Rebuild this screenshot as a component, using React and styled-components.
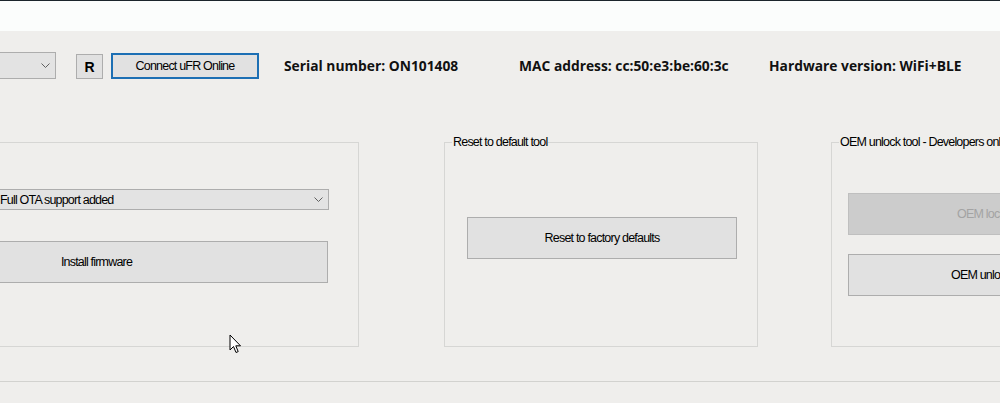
import React from 'react';
import styled, { createGlobalStyle } from 'styled-components';

const GlobalStyle = createGlobalStyle`
  html, body {
    margin: 0;
    padding: 0;
    width: 1000px;
    height: 403px;
    overflow: hidden;
    background: #efeeec;
  }
`;

const Window = styled.div`
  position: relative;
  width: 1000px;
  height: 403px;
  overflow: hidden;
  background: #efeeec;
  font-family: "Liberation Sans", Arial, sans-serif;
  font-size: 12.5px;
  letter-spacing: -0.8px;
  color: #000;
  display: flex;
  flex-direction: column;
`;

const TitleStrip = styled.div`
  flex: none;
  height: 30px;
  background: #fbfdfc;
  border-top: 1px solid #1b252b;
`;

const Canvas = styled.div`
  width: 1400px;
  margin-left: -160px;
  padding-left: 10px;
  display: flex;
  flex-direction: column;
`;

const Toolbar = styled.div`
  margin-top: 21px;
  height: 27px;
  display: flex;
  align-items: flex-end;
`;

const Combo = styled.div`
  box-sizing: border-box;
  width: ${p => p.$w}px;
  height: ${p => p.$h}px;
  margin: ${p => p.$m || '0'};
  padding-left: ${p => p.$indent || 3}px;
  padding-right: 5px;
  background: #e3e3e3;
  border: 1px solid #adadad;
  display: flex;
  align-items: center;
  justify-content: space-between;
  white-space: nowrap;
`;

const Button = styled.div`
  box-sizing: border-box;
  width: ${p => p.$w}px;
  height: ${p => p.$h}px;
  margin: ${p => p.$m || '0'};
  background: ${p => (p.$disabled ? '#cccccc' : '#e1e1e1')};
  border: ${p => (p.$focus ? '2px solid #1c6fb4' : p.$disabled ? '1px solid #bfbfbf' : '1px solid #adadad')};
  color: ${p => (p.$disabled ? '#a3a3a3' : '#000')};
  font-weight: ${p => (p.$bold ? 700 : 400)};
  font-size: ${p => (p.$bold ? '14px' : '12.5px')};
  letter-spacing: ${p => (p.$bold ? '0' : '-0.8px')};
  display: flex;
  align-items: center;
  justify-content: center;
  white-space: nowrap;
  flex: none;
`;

const InfoLabel = styled.div`
  width: ${p => (p.$w ? `${p.$w}px` : 'auto')};
  margin-left: ${p => p.$ml || 0}px;
  align-self: center;
  font-family: "Open Sans", "Liberation Sans", sans-serif;
  font-weight: 700;
  font-size: 13.8px;
  letter-spacing: 0;
  color: #111;
  white-space: nowrap;
  flex: none;
`;

const GroupRow = styled.div`
  margin-top: 56px;
  display: flex;
  align-items: flex-start;
`;

// a fieldset with a legend draws its top border at the legend's middle (7px down)
const Group = styled.fieldset`
  box-sizing: border-box;
  width: ${p => p.$w}px;
  height: ${p => (p.$bare ? 205 : 212)}px;
  margin: ${p => (p.$bare ? 7 : 0)}px 0 0 ${p => p.$ml || 0}px;
  padding: 0;
  min-width: 0;
  border: 1px solid #d6d6d4;
  display: flex;
  flex-direction: column;
  flex: none;
`;

const Legend = styled.legend`
  margin-left: 7px;
  padding: 0 1px;
  line-height: 14px;
  white-space: nowrap;
  color: #000;
`;

const Separator = styled.div`
  margin-top: 34px;
  height: 1px;
  background: #d2d2cf;
`;

const Chevron = () => (
  <svg width="9" height="5" viewBox="0 0 9 5" style={{ flex: 'none' }}>
    <path d="M0.5 0.5 L4.5 4.5 L8.5 0.5" fill="none" stroke="#606060" strokeWidth="1" />
  </svg>
);

const Cursor = styled.svg`
  position: absolute;
  left: 229px;
  top: 334px;
`;

export default function App() {
  return (
    <>
      <GlobalStyle />
      <Window>
        <TitleStrip />
        <Canvas>
          <Toolbar>
            <Combo $w={206} $h={27} $m="0 20px 0 0">
              <span />
              <Chevron />
            </Combo>
            <Button $w={27} $h={25} $bold>R</Button>
            <Button $w={148} $h={26} $m="0 0 0 8px" $focus>Connect uFR Online</Button>
            <InfoLabel $w={235} $ml={25}>Serial number: ON101408</InfoLabel>
            <InfoLabel $w={250}>MAC address: cc:50:e3:be:60:3c</InfoLabel>
            <InfoLabel>Hardware version: WiFi+BLE</InfoLabel>
          </Toolbar>

          <GroupRow>
            <Group $w={509} $bare>
              <Combo $w={464} $h={21} $m="46px 0 0 14px" $indent={134}>
                <span>Full OTA support added</span>
                <Chevron />
              </Combo>
              <Button $w={463} $h={42} $m="31px 0 0 14px">Install firmware</Button>
            </Group>

            <Group $w={314} $ml={85}>
              <Legend>Reset to default tool</Legend>
              <Button $w={270} $h={42} $m="68px 0 0 22px">Reset to factory defaults</Button>
            </Group>

            <Group $w={314} $ml={73}>
              <Legend>OEM unlock tool - Developers only</Legend>
              <Button $w={266} $h={42} $m="44px 0 0 16px" $disabled>OEM lock</Button>
              <Button $w={266} $h={42} $m="19px 0 0 16px">OEM unlock</Button>
            </Group>
          </GroupRow>

          <Separator />
        </Canvas>

        <Cursor width="14" height="21" viewBox="0 0 14 21">
          <path
            d="M1 1 L1 16 L4.5 12.5 L7 18.5 L9.2 17.6 L6.8 11.8 L11.5 11.8 Z"
            fill="#fff"
            stroke="#000"
            strokeWidth="1"
            strokeLinejoin="miter"
          />
        </Cursor>
      </Window>
    </>
  );
}
